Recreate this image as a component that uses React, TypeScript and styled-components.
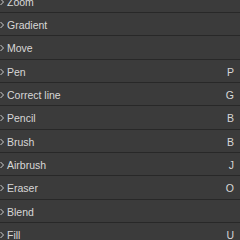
import React from "react";
import styled, { createGlobalStyle } from "styled-components";

const Global = createGlobalStyle`
  html, body { margin: 0; padding: 0; background: #3b3b3b; overflow: hidden; }
  body { font-family: "Liberation Sans", Arial, sans-serif; }
`;

const List = styled.div`
  margin-top: -10.33px;
  display: flex;
  flex-direction: column;
`;

const Row = styled.div`
  box-sizing: border-box;
  height: 23.333px;
  display: flex;
  align-items: center;
  padding: 2px 6px 0 0;
  border-bottom: 1px solid #282828;
  color: #d8d8d8;
  font-size: 10.5px;
`;

const Chevron = styled.svg`
  flex: none;
  width: 5px;
  height: 8px;
  margin-right: 2px;
`;

const Label = styled.span`
  flex: 1;
`;

const Key = styled.span`
  color: #d8d8d8;
`;

const items: [string, string][] = [
  ["Zoom", ""],
  ["Gradient", ""],
  ["Move", ""],
  ["Pen", "P"],
  ["Correct line", "G"],
  ["Pencil", "B"],
  ["Brush", "B"],
  ["Airbrush", "J"],
  ["Eraser", "O"],
  ["Blend", ""],
  ["Fill", "U"],
];

export default function App() {
  return (
    <>
      <Global />
      <List>
        {items.map(([name, key]) => (
          <Row key={name}>
            <Chevron viewBox="0 0 5 8">
              <polyline points="0.5,1 3.5,4 0.5,7" fill="none" stroke="#cfcfcf" strokeWidth="1" />
            </Chevron>
            <Label>{name}</Label>
            <Key>{key}</Key>
          </Row>
        ))}
      </List>
    </>
  );
}
